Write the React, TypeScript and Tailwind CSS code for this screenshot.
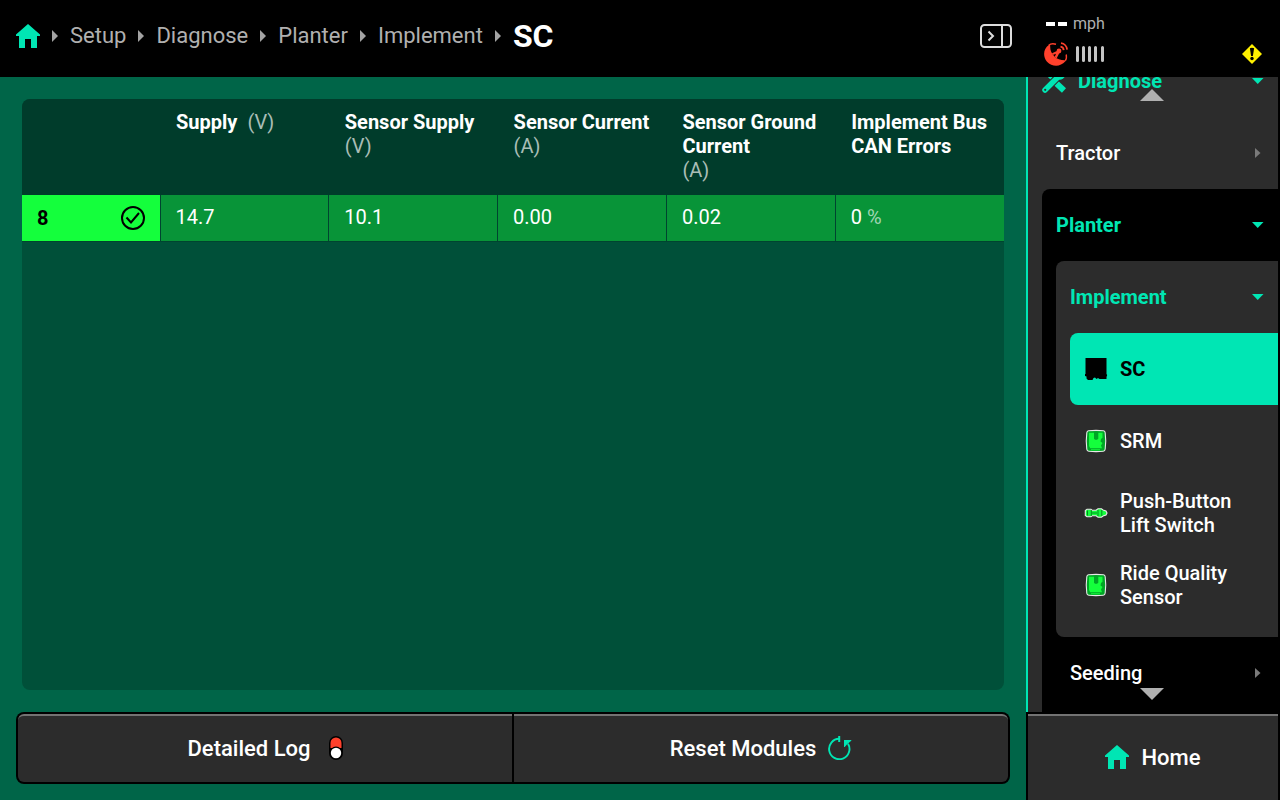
import type { ReactNode } from "react";

const columns = [
  { label: "Supply", unit: "(V)", value: "14.7", suffix: "" },
  { label: "Sensor Supply", unit: "(V)", value: "10.1", suffix: "" },
  { label: "Sensor Current", unit: "(A)", value: "0.00", suffix: "" },
  { label: "Sensor Ground Current", unit: "(A)", value: "0.02", suffix: "" },
  { label: "Implement Bus CAN Errors", unit: "", value: "0", suffix: "%" },
];

const crumbs = ["Setup", "Diagnose", "Planter", "Implement"];

function HomeIcon() {
  return (
    <svg className="size-6 shrink-0" viewBox="0 0 24 24" fill="#00e6b4" aria-hidden="true">
      <path d="M12 0 24 10.6V12h-3v12h-6v-9H9v9H3V12H0v-1.400z" />
    </svg>
  );
}

function CrumbArrow() {
  return (
    <svg className="h-3 w-1.5 shrink-0" viewBox="0 0 6 12" fill="#a3a3a3" aria-hidden="true">
      <path d="M0 0 6 6 0 12z" />
    </svg>
  );
}

function DownArrow() {
  return (
    <svg className="h-1.5 w-3 shrink-0" viewBox="0 0 12 6" fill="#00e6b4" aria-hidden="true">
      <path d="M0 0h11.500L5.700 6z" />
    </svg>
  );
}

function RightArrow() {
  return (
    <svg className="h-2.5 w-3 shrink-0" viewBox="0 0 12 10" fill="#7a7a7a" aria-hidden="true">
      <path d="M3 0 8.500 5 3 10z" />
    </svg>
  );
}

function PanelIcon() {
  return (
    <svg className="h-6 w-8" viewBox="0 0 32 24" fill="none" stroke="#dcdcdc" strokeWidth="2" aria-hidden="true">
      <rect x="1" y="1" width="30" height="22" rx="3.500" />
      <path d="M22 1v22M8.500 7.500 13 12l-4.500 4.500" />
    </svg>
  );
}

function DishIcon() {
  return (
    <svg className="size-6" viewBox="0 0 24 24" fill="#ff412c" aria-hidden="true">
      <path d="M4.800 3C-.6 6.500-1.500 14.500 3 19.700c5 5.300 13.500 5.300 18.200-.2.500-.7.300-1.200-.5-1.200C16.500 18.300 13 17 10.500 14.500 7.500 11.500 6 8 6.200 4.100 6.200 2.900 5.700 2.500 4.800 3z" />
      <path d="M4.800 3.300C6.500 1.500 9 1.400 12 2.200M21.300 18.800c1.400-1.800 1.400-3.800.9-6.300" fill="none" stroke="#ff412c" strokeWidth="1.400" />
      <path d="m8 11.300 6-2.800 1.700 1.700-3 6-2-1.200 1.300-3.200-3.200 1.100z" />
      <circle cx="15" cy="9" r="2.400" />
      <path d="M16.500 4.600a3.800 3.800 0 0 1 3.200 3.500M17 1.100a7 7 0 0 1 6.100 6.500" fill="none" stroke="#ff412c" strokeWidth="1.800" />
    </svg>
  );
}

function SignalBars() {
  return (
    <svg className="h-4 w-7" viewBox="0 0 28 16" stroke="#c4c4c4" strokeWidth="3" strokeLinecap="round" aria-hidden="true">
      <path d="M1.500 1.500v13M7.500 1.500v13M13.500 1.500v13M19.500 1.500v13M26.500 1.500v13" />
    </svg>
  );
}

function WarningIcon() {
  return (
    <svg className="size-5" viewBox="0 0 20 20" aria-hidden="true">
      <path d="M10 0 20 10 10 20 0 10z" fill="#fff000" />
      <path d="M7.900 4.200q2.100-1 4.200 0L10.900 12H9.100z" fill="#000" />
      <circle cx="10" cy="14.500" r="1.700" fill="#000" />
    </svg>
  );
}

function ToolsIcon() {
  return (
    <svg className="size-6 shrink-0" viewBox="0 0 24 24" fill="none" stroke="#00e6b4" aria-hidden="true">
      <path d="M2 2 12 12" strokeWidth="3" />
      <path d="m14 14 8 7.500" strokeWidth="6" />
      <path d="M3 21 16 8" stroke="#2c2c2c" strokeWidth="7.500" />
      <path d="M3 21 16 8" strokeWidth="5.500" strokeLinecap="round" />
      <path d="M14 7a5 5 0 0 1 7-6l-3 3 2 2 3-2a5 5 0 0 1-6 6z" fill="#00e6b4" strokeWidth="1" />
      <circle cx="3.200" cy="20.800" r="1.100" fill="#2c2c2c" stroke="none" />
    </svg>
  );
}

function ControllerIcon() {
  return (
    <svg className="size-6 shrink-0" viewBox="0 0 24 24" aria-hidden="true">
      <path d="M1.500 1h21v16l.7 1-.7 2v2h-7l-1.500-1-1.500 1-1.500-1.500-1.500.5L8.500 23H4l-1.500-1.500V19.500L1 19v-2h.5z" fill="#000" />
    </svg>
  );
}

function ModuleIcon() {
  return (
    <svg className="size-6 shrink-0" viewBox="0 0 24 24" aria-hidden="true">
      <path d="M4.500 1.800Q12 .9 19.500 1.800q1.500.2 1.700 2Q22.300 12 21.200 20q-.2 2-2 2.200-7.200.8-14.400 0-1.800-.2-2-2Q1.700 12 2.800 3.800q.2-1.800 1.700-2z" fill="#00a526" stroke="#e8e8e8" strokeWidth="1.100" />
      <path d="M5 3.800h5v6l1 1h2l1.300-1v-6h4.200v5L17 10l-.5 2.500 2 1.500-1.500 2.500 1 2.800H6.200L5 17z" fill="#14ff3c" />
      <path d="M7 20.800h9" stroke="#14ff3c" strokeWidth="1" />
    </svg>
  );
}

function SwitchIcon() {
  return (
    <svg className="size-6 shrink-0" viewBox="0 0 24 24" aria-hidden="true">
      <path d="M3 8.300h4l1 .9h4l2-1.400h3.500L19 9l3 1 1 2-1 2-3 1-1.500 1.200H14l-2-1.400H8l-1 .9H3L1.300 14.500v-5z" fill="#14ff3c" stroke="#e8e8e8" strokeWidth="1.100" />
      <path d="M3.500 9.500v5M7.300 9v6M8 12h5M14 9v6M17.800 9v6" stroke="#008b20" strokeWidth="1" />
    </svg>
  );
}

function CheckIcon() {
  return (
    <svg className="size-6" viewBox="0 0 24 24" fill="none" stroke="#000" strokeWidth="2" role="img" aria-label="OK">
      <circle cx="12" cy="12" r="11" />
      <path d="m5.500 11.500 4.500 5 8-9.500" />
    </svg>
  );
}

function ToggleIcon() {
  return (
    <svg className="h-6 w-3.5" viewBox="0 0 14 24" aria-hidden="true">
      <rect width="14" height="24" rx="7" fill="#000" />
      <path d="M1.500 12V7a5.500 5.500 0 0 1 11 0v5z" fill="#ff412c" />
      <circle cx="7" cy="17" r="6.500" fill="#000" />
      <circle cx="7" cy="17" r="5.200" fill="#fff" />
    </svg>
  );
}

function ResetIcon() {
  return (
    <svg className="size-6" viewBox="0 0 24 24" aria-hidden="true">
      <path d="M11.200 2.800A10.200 10.200 0 1 0 20 7.700" fill="none" stroke="#00e6b4" strokeWidth="1.900" />
      <path d="M10.200 0h2v6h-2zM16 4h7.300v.7L20.600 7l-1.500 1.300L16.700 11H16z" fill="#00e6b4" />
    </svg>
  );
}

function NavRow({ children, arrow, open = false }: { children: ReactNode; arrow: ReactNode; open?: boolean }) {
  return (
    <button
      type="button"
      aria-expanded={open}
      className={`flex h-18 w-full items-center justify-between pl-3.5 pr-3.5 text-left text-xl ${
        open ? "font-bold text-[#00e6b4]" : "font-medium text-white"
      }`}
    >
      {children}
      {arrow}
    </button>
  );
}

function NavLink({ icon, label, active = false }: { icon: ReactNode; label: string; active?: boolean }) {
  return (
    <a
      href="#"
      aria-current={active ? "page" : undefined}
      className={`flex h-18 items-center gap-3 rounded-l-lg pl-3.5 pr-6 text-xl leading-6 ${
        active ? "bg-[#00e6b4] font-bold text-black" : "font-medium text-white"
      }`}
    >
      {icon}
      <span>{label}</span>
    </a>
  );
}

function Header() {
  return (
    <header className="flex h-[77px] shrink-0 bg-black">
      <div className="flex min-w-0 flex-1 items-center justify-between pb-1.5 pl-4 pr-3.5">
        <nav aria-label="Breadcrumb" className="flex items-center gap-3 text-[22px] text-[#b0b0b0]">
          <a href="#" aria-label="Home">
            <HomeIcon />
          </a>
          {crumbs.map((crumb) => (
            <div key={crumb} className="flex items-center gap-3">
              <CrumbArrow />
              <a href="#">{crumb}</a>
            </div>
          ))}
          <CrumbArrow />
          <h1 className="text-[32px] font-bold text-white">SC</h1>
        </nav>
        <button type="button" aria-label="Collapse panel">
          <PanelIcon />
        </button>
      </div>
      <div className="flex w-[254px] flex-col justify-center gap-1.5 pl-4.5 pr-4">
        <div className="flex items-center gap-1.5 pl-0.5 text-base text-[#b0b0b0]">
          <span className="flex gap-[3px]">
            <span className="h-1 w-[9px] bg-white" />
            <span className="h-1 w-[9px] bg-white" />
          </span>
          mph
        </div>
        <div className="flex items-center justify-between pr-0.5">
          <span className="flex items-center gap-2">
            <DishIcon />
            <SignalBars />
          </span>
          <WarningIcon />
        </div>
      </div>
    </header>
  );
}

function DiagnosticsTable() {
  return (
    <div className="flex-1 overflow-hidden rounded-lg bg-[#005039]">
      <table className="w-full table-fixed border-collapse text-left text-xl leading-6">
        <thead>
          <tr className="h-24 bg-[#003c2b] align-top">
            <td className="w-[138px]" />
            {columns.map((c) => (
              <th key={c.label} scope="col" className="pl-4 pr-2 pt-[11px] font-bold text-white">
                <div className="flex flex-wrap gap-x-2.5">
                  <span>{c.label}</span>
                  {c.unit && <span className="font-normal text-[#a9bdb6]">{c.unit}</span>}
                </div>
              </th>
            ))}
          </tr>
        </thead>
        <tbody>
          <tr className="h-[46px] border-b border-[#004430] bg-[#089438] text-white">
            <th scope="row" className="bg-[#14ff3c] px-[15px] font-bold text-black">
              <div className="flex items-center justify-between">
                8
                <CheckIcon />
              </div>
            </th>
            {columns.map((c) => (
              <td key={c.label} className="border-l border-[#004430] pb-0.5 pl-[15px]">
                {c.value}
                {c.suffix && <span className="text-[#a0d6b2]"> {c.suffix}</span>}
              </td>
            ))}
          </tr>
        </tbody>
      </table>
    </div>
  );
}

function Sidebar() {
  return (
    <aside className="flex w-[254px] shrink-0 flex-col bg-black pr-0.5">
      <div className="relative min-h-0 flex-1 overflow-hidden border-l-2 border-[#00e6b4] bg-[#2c2c2c]">
        <nav aria-label="Diagnose" className="-mt-8">
          <NavRow open arrow={<DownArrow />}>
            <span className="flex items-center gap-3">
              <ToolsIcon />
              Diagnose
            </span>
          </NavRow>
          <div className="pl-3.5">
            <NavRow arrow={<RightArrow />}>Tractor</NavRow>
            <div className="rounded-tl-lg bg-black pb-18">
              <NavRow open arrow={<DownArrow />}>Planter</NavRow>
              <div className="pl-3.5">
                <div className="rounded-l-lg bg-[#2c2c2c] pb-4">
                  <NavRow open arrow={<DownArrow />}>Implement</NavRow>
                  <div className="pl-3.5">
                    <NavLink active icon={<ControllerIcon />} label="SC" />
                    <NavLink icon={<ModuleIcon />} label="SRM" />
                    <NavLink icon={<SwitchIcon />} label="Push-Button Lift Switch" />
                    <NavLink icon={<ModuleIcon />} label="Ride Quality Sensor" />
                  </div>
                </div>
                <NavRow arrow={<RightArrow />}>Seeding</NavRow>
              </div>
            </div>
          </div>
        </nav>
        <svg className="absolute left-0 right-0.5 top-3 mx-auto h-3 w-6" viewBox="0 0 24 12" fill="#b0b0b0" aria-hidden="true">
          <path d="M0 12 12 0l12 12z" />
        </svg>
        <svg className="absolute bottom-3 left-0 right-0.5 mx-auto h-3 w-6" viewBox="0 0 24 12" fill="#b0b0b0" aria-hidden="true">
          <path d="M0 0h24L12 12z" />
        </svg>
      </div>
      <button
        type="button"
        className="ml-0.5 mt-0.5 flex h-[86px] items-center justify-center gap-3 border-t-2 border-[#737373] bg-[#2c2c2c] pb-0.5 text-[22px] font-medium text-white"
      >
        <HomeIcon />
        Home
      </button>
    </aside>
  );
}

export default function App() {
  return (
    <div className="flex h-screen flex-col bg-[#006548] font-['Roboto',sans-serif]">
      <Header />
      <div className="flex min-h-0 flex-1">
        <main className="flex min-w-0 flex-1 flex-col gap-[22px] pb-4 pl-4 pr-4 pt-[22px]">
          <div className="flex flex-1 pl-1.5 pr-1.5">
            <DiagnosticsTable />
          </div>
          <div className="flex h-18 gap-0.5 rounded-lg bg-black p-0.5 text-[22px] font-medium text-white">
            <button
              type="button"
              className="flex flex-1 items-center justify-center gap-4.5 rounded-l-md border-t-2 border-[#737373] bg-[#2c2c2c] pb-0.5"
            >
              Detailed Log
              <ToggleIcon />
            </button>
            <button
              type="button"
              className="flex flex-1 items-center justify-center gap-3 rounded-r-md border-t-2 border-[#737373] bg-[#2c2c2c] pb-0.5"
            >
              Reset Modules
              <ResetIcon />
            </button>
          </div>
        </main>
        <Sidebar />
      </div>
    </div>
  );
}
